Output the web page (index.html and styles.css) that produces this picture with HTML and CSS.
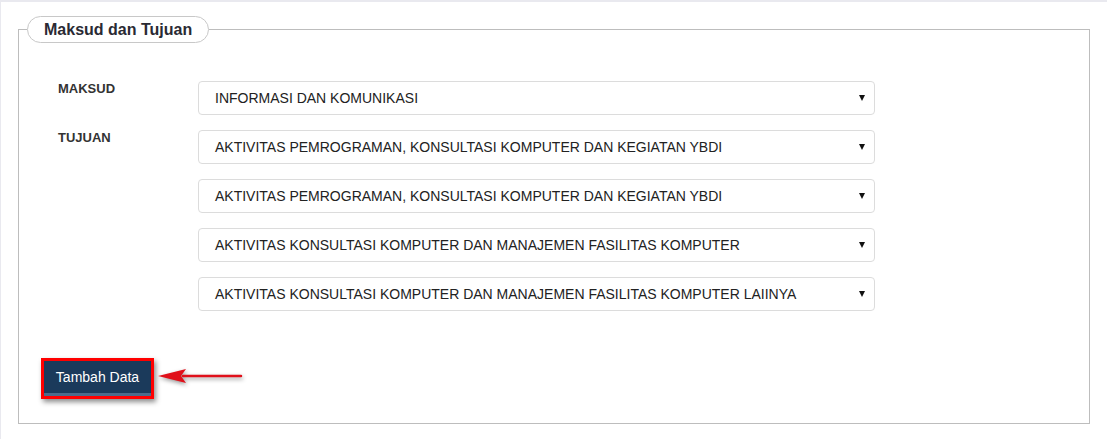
FILE: index.html
```html
<!DOCTYPE html>
<html lang="en">
<head>
  <meta charset="UTF-8">
  <meta name="viewport" content="width=device-width, initial-scale=1.0">
  <title>Maksud dan Tujuan</title>
  <link rel="stylesheet" href="styles.css">
</head>
<body>
  <div class="page">
    <fieldset class="panel">
      <legend class="panelTitle">Maksud dan Tujuan</legend>
      <div class="panelBody">
        <div class="formGrid">
          <div class="label">MAKSUD</div>
          <div class="fields">
            <div class="select"><span>INFORMASI DAN KOMUNIKASI</span><i class="caret"></i></div>
          </div>
          <div class="label">TUJUAN</div>
          <div class="fields">
            <div class="select"><span>AKTIVITAS PEMROGRAMAN, KONSULTASI KOMPUTER DAN KEGIATAN YBDI</span><i class="caret"></i></div>
            <div class="select"><span>AKTIVITAS PEMROGRAMAN, KONSULTASI KOMPUTER DAN KEGIATAN YBDI</span><i class="caret"></i></div>
            <div class="select"><span>AKTIVITAS KONSULTASI KOMPUTER DAN MANAJEMEN FASILITAS KOMPUTER</span><i class="caret"></i></div>
            <div class="select"><span>AKTIVITAS KONSULTASI KOMPUTER DAN MANAJEMEN FASILITAS KOMPUTER LAIINYA</span><i class="caret"></i></div>
          </div>
        </div>

        <div class="action">
          <div class="highlight">
            <button class="btnAdd">Tambah Data</button>
          </div>
          <svg class="pointer" width="92" height="30" viewBox="0 0 92 30">
            <line x1="28" y1="13" x2="86" y2="13" stroke="#e0101a" stroke-width="2.5" stroke-linecap="round"/>
            <polygon points="3,13 31,6 26,13 31,20" fill="#e0101a"/>
          </svg>
        </div>
      </div>
    </fieldset>
  </div>
</body>
</html>
```

FILE: styles.css
```css
body {
  margin: 0;
  font-family: "Liberation Sans", Arial, sans-serif;
  color: #333;
  background: #fff;
}

.page {
  height: 439px;
  box-sizing: border-box;
  border-top: 2px solid #e9e9ef;
  border-left: 1px solid #e9e9ef;
  padding-top: 14px;
}

.panel {
  margin: 0 17px 0 17px;
  padding: 0;
  border: 1px solid #bdbdbd;
  min-width: 0;
}

.panelTitle {
  margin-left: 8px;
  padding: 0 16px;
  height: 27px;
  line-height: 25px;
  box-sizing: border-box;
  border: 1px solid #c8c8c8;
  border-radius: 14px;
  background: #fff;
  font-size: 16px;
  font-weight: bold;
  color: #2a2a33;
}

.panelBody {
  padding: 38px 0 24px 22px;
}

.formGrid {
  display: grid;
  grid-template-columns: 140px 677px;
  row-gap: 15px;
  margin-left: 17px;
}

.label {
  font-size: 13px;
  font-weight: bold;
  color: #333;
}

.fields {
  display: flex;
  flex-direction: column;
  gap: 15px;
}

.select {
  display: flex;
  align-items: center;
  justify-content: space-between;
  height: 34px;
  box-sizing: border-box;
  padding: 0 9px 0 16px;
  border: 1px solid #dcdcdc;
  border-radius: 4px;
  font-size: 14px;
  color: #222;
}

.caret {
  width: 0;
  height: 0;
  border-left: 3px solid transparent;
  border-right: 3px solid transparent;
  border-top: 6px solid #111;
}

.action {
  position: relative;
  display: inline-block;
  margin-top: 47px;
}

.highlight {
  border: 3px solid #f00;
  box-shadow: 2px 3px 5px rgba(0, 0, 0, 0.45);
}

.btnAdd {
  display: block;
  width: 107px;
  height: 35px;
  padding: 0;
  border: 0;
  border-bottom: 3px solid #4c6b8c;
  background: #1b3a5b;
  color: #fff;
  font-family: "Liberation Sans", Arial, sans-serif;
  font-size: 14px;
}

.pointer {
  position: absolute;
  left: 114px;
  top: 5px;
  filter: drop-shadow(1px 2px 2px rgba(0, 0, 0, 0.4));
}
```
